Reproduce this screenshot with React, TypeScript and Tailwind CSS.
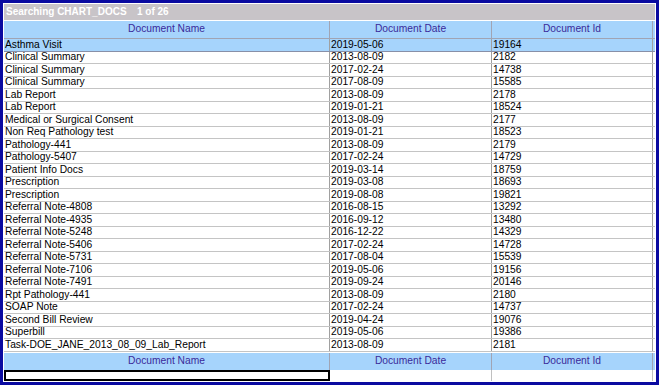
import React from 'react';

const ROWS: Array<[string, string, string]> = [
  ['Asthma Visit', '2019-05-06', '19164'],
  ['Clinical Summary', '2013-08-09', '2182'],
  ['Clinical Summary', '2017-02-24', '14738'],
  ['Clinical Summary', '2017-08-09', '15585'],
  ['Lab Report', '2013-08-09', '2178'],
  ['Lab Report', '2019-01-21', '18524'],
  ['Medical or Surgical Consent', '2013-08-09', '2177'],
  ['Non Req Pathology test', '2019-01-21', '18523'],
  ['Pathology-441', '2013-08-09', '2179'],
  ['Pathology-5407', '2017-02-24', '14729'],
  ['Patient Info Docs', '2019-03-14', '18759'],
  ['Prescription', '2019-03-08', '18693'],
  ['Prescription', '2019-08-08', '19821'],
  ['Referral Note-4808', '2016-08-15', '13292'],
  ['Referral Note-4935', '2016-09-12', '13480'],
  ['Referral Note-5248', '2016-12-22', '14329'],
  ['Referral Note-5406', '2017-02-24', '14728'],
  ['Referral Note-5731', '2017-08-04', '15539'],
  ['Referral Note-7106', '2019-05-06', '19156'],
  ['Referral Note-7491', '2019-09-24', '20146'],
  ['Rpt Pathology-441', '2013-08-09', '2180'],
  ['SOAP Note', '2017-02-24', '14737'],
  ['Second Bill Review', '2019-04-24', '19076'],
  ['Superbill', '2019-05-06', '19386'],
  ['Task-DOE_JANE_2013_08_09_Lab_Report', '2013-08-09', '2181'],
];

const COLS = 'grid grid-cols-[326px_162px_161px]';

function HeaderRow() {
  return (
    <div className={`${COLS} h-[17px] bg-[#a6d4fc] text-[#3a2a9a]`}>
      {['Document Name', 'Document Date', 'Document Id'].map((h) => (
        <div key={h} className="flex items-center justify-center border-r border-[#a0a4b4]">
          {h}
        </div>
      ))}
    </div>
  );
}

export default function App() {
  return (
    <div
      className="w-[659px] h-[385px] bg-[#0a0aa0] p-[3px] text-[10.25px] leading-none text-black"
      style={{ fontFamily: '"Liberation Sans", Arial, sans-serif' }}
    >
      <div className="flex h-full flex-col bg-white p-px">
        {/* Title bar */}
        <div className="flex h-[16px] shrink-0 items-center bg-[#c8c4c8] pl-[2px] text-[10px] font-bold text-white">
          <span className="w-[131px]">Searching CHART_DOCS</span>
          <span>1 of 26</span>
        </div>
        <div className="mt-px shrink-0 border-b border-[#a0a4b4]">
          <HeaderRow />
        </div>

        {/* Rows */}
        <div className="flex shrink-0 flex-col">
          {ROWS.map((r, idx) => (
            <div
              key={idx}
              className={`${COLS} h-[12.52px] border-b ${
                idx === 0 ? 'bg-[#a6d4fc] border-[#8890a8]' : 'border-[#c4c4c4]'
              }`}
            >
              {r.map((c, i) => (
                <div key={i} className="flex items-center border-r border-[#a0a0a0] pl-px">
                  {c}
                </div>
              ))}
            </div>
          ))}
        </div>

        {/* Footer */}
        <div className="mt-px shrink-0">
          <HeaderRow />
        </div>
        <div className={`${COLS} h-[11px] shrink-0`}>
          <div className="border-2 border-black bg-white" />
          <div className="border-r border-[#c0c0c0]" />
          <div className="border-r border-[#c0c0c0]" />
        </div>
      </div>
    </div>
  );
}
